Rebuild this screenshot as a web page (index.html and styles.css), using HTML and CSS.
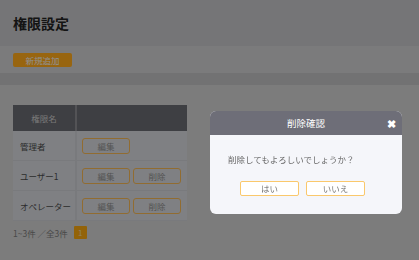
FILE: index.html
```html
<!DOCTYPE html>
<html lang="ja">
<head>
    <meta charset="UTF-8">
    <meta name="viewport" content="width=device-width, initial-scale=1.0">
    <title>権限設定</title>
    <link rel="stylesheet" href="styles.css">
</head>
<body>
    <header class="page-head">
        <h1>権限設定</h1>
    </header>
    <div class="toolbar">
        <button class="btn-add">新規追加</button>
    </div>
    <div class="band"></div>
    <main class="content">
        <table class="role-table">
            <thead>
                <tr>
                    <th class="col-name">権限名</th>
                    <th class="col-ops"></th>
                </tr>
            </thead>
            <tbody>
                <tr>
                    <td>管理者</td>
                    <td><button class="btn-line">編集</button></td>
                </tr>
                <tr>
                    <td>ユーザー1</td>
                    <td><button class="btn-line">編集</button><button class="btn-line">削除</button></td>
                </tr>
                <tr>
                    <td>オペレーター</td>
                    <td><button class="btn-line">編集</button><button class="btn-line">削除</button></td>
                </tr>
            </tbody>
        </table>
        <div class="pager">
            <span>1~3件 ／全3件</span>
            <span class="page-num">1</span>
        </div>
    </main>

    <div class="overlay"></div>
    <div class="modal">
        <div class="modal-head">
            <span>削除確認</span>
            <span class="modal-close">&#x2716;</span>
        </div>
        <div class="modal-body">
            <p>削除してもよろしいでしょうか？</p>
            <div class="modal-actions">
                <button class="btn-modal">はい</button>
                <button class="btn-modal">いいえ</button>
            </div>
        </div>
    </div>
</body>
</html>
```

FILE: styles.css
```css
body {
    margin: 0;
    font-family: "Noto Sans CJK JP", "Noto Sans", sans-serif;
    background-color: #cfcfcf;
    height: 260px;
    overflow: hidden;
}
.page-head {
    background-color: #c4c4c6;
    height: 46px;
    padding-left: 13px;
    box-sizing: border-box;
    display: flex;
    align-items: center;
}
.page-head h1 {
    margin: 0;
    font-size: 14px;
    font-weight: bold;
    color: #222;
}
.toolbar {
    background-color: #cdcdcf;
    height: 27px;
    padding-left: 13px;
    display: flex;
    align-items: center;
}
.btn-add {
    width: 59px;
    height: 14px;
    padding: 0;
    border: none;
    border-radius: 2px;
    background-color: #fda81c;
    color: #f0f0f0;
    font-family: inherit;
    font-size: 8.5px;
    line-height: 14px;
}
.band {
    background-color: #bebec0;
    height: 12px;
}
.content {
    padding: 20px 13px 0;
}
.role-table {
    border-collapse: collapse;
    width: 174px;
    font-size: 8.5px;
    color: #4a4a4a;
}
.role-table th {
    background-color: #686a70;
    color: #c8c8c8;
    font-weight: normal;
    height: 26px;
    padding: 0;
}
.role-table .col-name {
    width: 62px;
    border-right: 2px solid #8a8b90;
}
.role-table td {
    background-color: #d4d6da;
    height: 29px;
    padding: 0;
    white-space: nowrap;
    border-bottom: 1px solid #cacbd0;
}
.role-table td:first-child {
    padding-left: 7px;
    border-right: 2px solid #cacbd0;
}
.role-table td:last-child {
    padding-left: 5px;
}
.btn-line {
    width: 48px;
    height: 16px;
    padding: 0;
    margin-right: 3px;
    background-color: transparent;
    border: 1px solid #f2b552;
    border-radius: 3px;
    color: #8c8c8c;
    font-family: inherit;
    font-size: 8.5px;
    line-height: 14px;
}
.pager {
    margin-top: 5px;
    display: flex;
    align-items: center;
    gap: 6px;
    font-size: 8.5px;
    color: #7a7a7a;
}
.page-num {
    width: 13px;
    height: 13px;
    background-color: #f6a610;
    color: #f4d8a0;
    font-size: 8px;
    line-height: 13px;
    text-align: center;
    border-radius: 1px;
}
.overlay {
    position: fixed;
    inset: 0;
    background-color: rgba(0, 0, 0, 0.4);
}
.modal {
    position: absolute;
    left: 210px;
    top: 111px;
    width: 192px;
    height: 103px;
    border-radius: 6px;
    overflow: hidden;
    background-color: #f5f6fa;
}
.modal-head {
    position: relative;
    height: 24px;
    background-color: #6e6e78;
    color: #fff;
    font-size: 9.5px;
    line-height: 24px;
    text-align: center;
}
.modal-close {
    position: absolute;
    right: 6px;
    top: 0;
    font-size: 11px;
    font-weight: bold;
}
.modal-body {
    padding: 0 18px;
}
.modal-body p {
    margin: 17px 0 0;
    font-size: 8.5px;
    color: #666;
    line-height: 14px;
}
.modal-actions {
    margin-top: 15px;
    padding-left: 12px;
    display: flex;
    gap: 7px;
}
.btn-modal {
    width: 59px;
    height: 15px;
    padding: 0;
    background-color: #fff;
    border: 1px solid #fac86c;
    border-radius: 2px;
    color: #777;
    font-family: inherit;
    font-size: 8.5px;
    line-height: 13px;
}
```
